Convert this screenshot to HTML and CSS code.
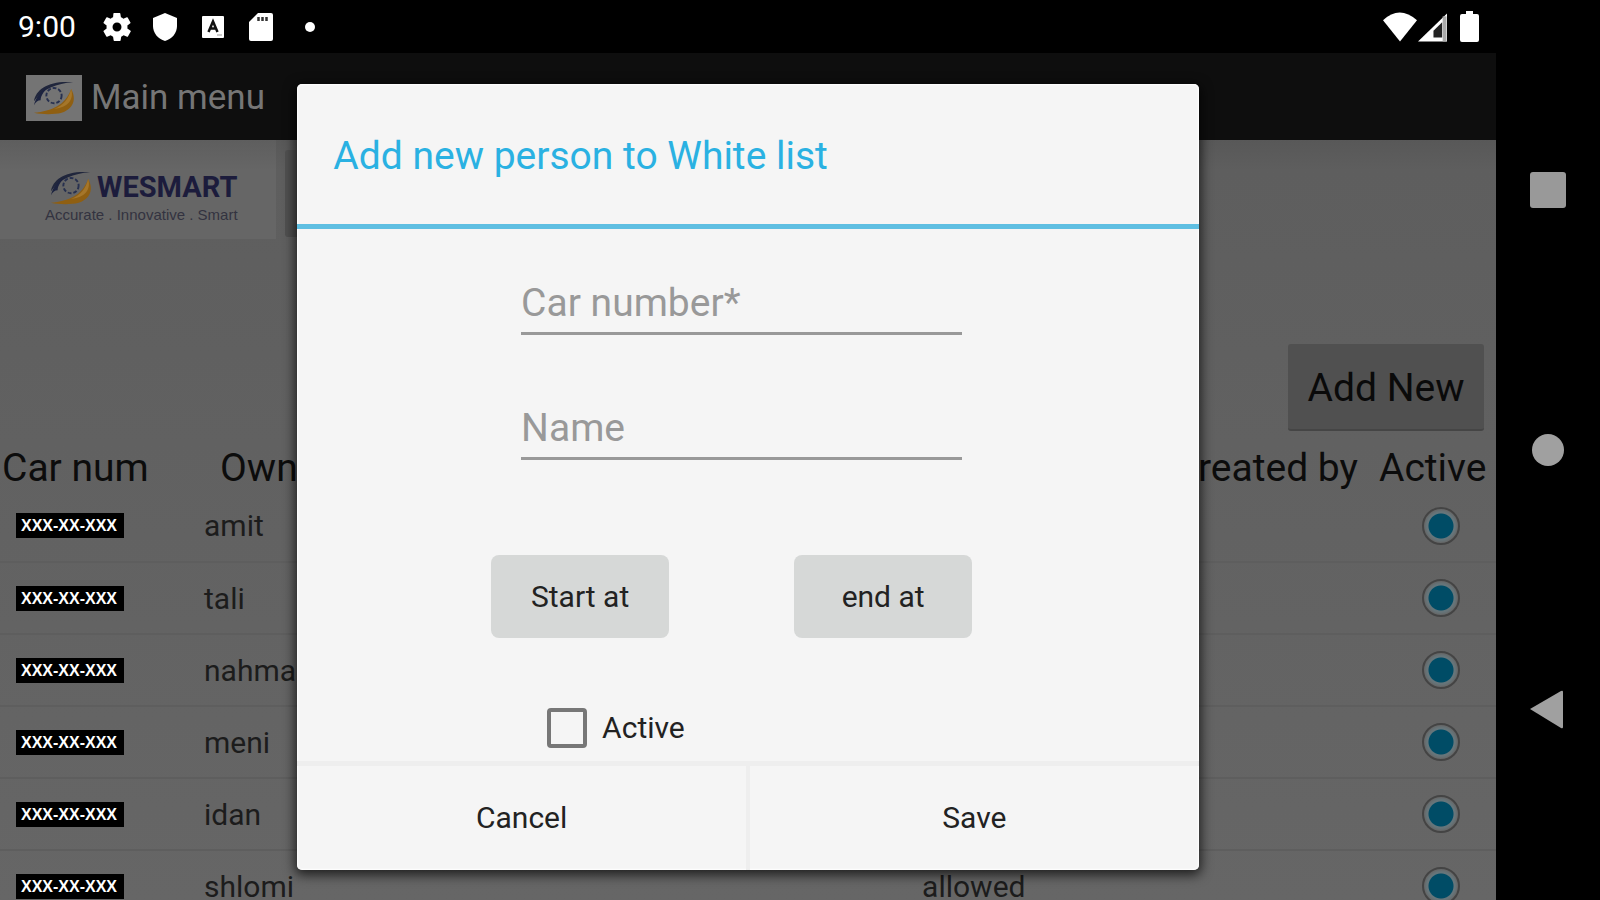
FILE: index.html
```html
<!DOCTYPE html>
<html lang="en">
<head>
    <meta charset="UTF-8">
    <meta name="viewport" content="width=device-width, initial-scale=1.0">
    <title>White list</title>
    <link rel="stylesheet" href="styles.css">
</head>
<body>
    <svg width="0" height="0" class="defs" aria-hidden="true">
        <symbol id="eye" viewBox="0 0 44 36">
            <path d="M1 22C3 9 17 0 42 2C25 3 10 9 1 22Z" fill="#20263c"/>
            <path d="M1 26C3 18 8 11 16 7C10 13 8 17 8 21C5 21 3 23 1 26Z" fill="#1c2340"/>
            <circle cx="22" cy="16" r="8" fill="none" stroke="#27304f" stroke-width="2" stroke-dasharray="4 2"/>
            <path d="M1 34C20 32 34 26 40 9C46 20 42 30 30 34C22 36 10 36 1 34Z" fill="#8f5f12"/>
            <path d="M22 30C32 26 37 20 40 9C43 19 38 28 22 30Z" fill="#a5762a"/>
        </symbol>
    </svg>
    <div class="device">
        <div class="screen">
            <div class="status">
                <span class="time">9:00</span>
                <div class="icons">
                    <svg viewBox="2 2 20 20"><path fill="#fff" fill-rule="evenodd" d="M19.4 13a7 7 0 0 0 0-2l2.1-1.6a.5.5 0 0 0 .1-.6l-2-3.5a.5.5 0 0 0-.6-.2l-2.5 1a7 7 0 0 0-1.7-1l-.4-2.6a.5.5 0 0 0-.5-.5h-4a.5.5 0 0 0-.5.5L9.200 5.100a7 7 0 0 0-1.700 1l-2.500-1a.5.5 0 0 0-.6.2l-2 3.500a.5.5 0 0 0 .1.600L4.600 11a7 7 0 0 0 0 2l-2.100 1.600a.5.5 0 0 0-.1.600l2 3.500c.1.200.4.300.6.200l2.500-1a7 7 0 0 0 1.700 1l.4 2.600c0 .3.200.5.500.5h4c.3 0 .5-.2.500-.5l.4-2.600a7 7 0 0 0 1.700-1l2.500 1c.2.100.5 0 .6-.2l2-3.500a.5.5 0 0 0-.1-.6zM12 15.200a3.200 3.200 0 1 1 0-6.400a3.200 3.200 0 0 1 0 6.400z"/></svg>
                    <svg viewBox="0 0 28 28"><path fill="#fff" d="M14 0L26 5V13C26 20 21 26 14 28C7 26 2 20 2 13V5Z"/></svg>
                    <svg viewBox="0 0 28 28"><rect x="3" y="3" width="22" height="22" rx="1" fill="#fff"/><path d="M9.500 19L14 8.500L18.500 19M11.500 15.500h5" fill="none" stroke="#111" stroke-width="2.500"/><path d="M18 22h5" stroke="#999" stroke-width="1"/></svg>
                    <svg viewBox="0 0 28 28"><path fill="#fff" d="M11 0H24Q26 0 26 2V26Q26 28 24 28H4Q2 28 2 26V9Z"/><path d="M11.500 4v4M15.500 4v4M19.500 4v4" stroke="#333" stroke-width="2.500"/></svg>
                    <svg viewBox="0 0 28 28"><circle cx="15" cy="14" r="5" fill="#fff"/></svg>
                </div>
                <div class="signal">
                    <svg width="34" height="31" viewBox="0 0 35 31"><path fill="#fff" d="M0 9Q17 -7 35 9L17.500 31Z"/></svg>
                    <svg width="29" height="31" viewBox="0 0 30 31"><path fill="#fff" d="M0 31L30 2V31Z"/><path fill="#222" d="M16 20L25 11V27H16Z"/><path d="M27.500 5V31" stroke="#aaa" stroke-width="4"/></svg>
                    <svg class="battery" width="19" height="31" viewBox="0 0 19 31"><path fill="#fff" d="M6 0H13V3H17Q19 3 19 5V29Q19 31 17 31H2Q0 31 0 29V5Q0 3 2 3H6Z"/></svg>
                </div>
            </div>
            <div class="actionbar">
                <span class="app-icon"><svg width="42" height="35"><use href="#eye"/></svg></span>
                <span>Main menu</span>
            </div>
            <div class="content">
                <div class="top">
                    <div class="brand">
                        <div class="brand-row">
                            <svg width="42" height="35"><use href="#eye"/></svg>
                            <span class="brand-name">WESMART</span>
                        </div>
                        <div class="tagline">Accurate . Innovative . Smart</div>
                    </div>
                    <div class="tab"></div>
                </div>
                <div class="toolbar">
                    <button class="add-new" type="button">Add New</button>
                </div>
                <table>
                    <colgroup>
                        <col class="col-car">
                        <col class="col-owner">
                        <col>
                        <col class="col-active">
                    </colgroup>
                    <thead>
                        <tr><th>Car num</th><th class="owner">Owner</th><th class="created">Created by</th><th class="active">Active</th></tr>
                    </thead>
                    <tbody>
                        <tr><td><span class="plate">XXX-XX-XXX</span></td><td>amit</td><td></td><td class="state"><input type="radio" name="r1" aria-label="Active" checked></td></tr>
                        <tr><td><span class="plate">XXX-XX-XXX</span></td><td>tali</td><td></td><td class="state"><input type="radio" name="r2" aria-label="Active" checked></td></tr>
                        <tr><td><span class="plate">XXX-XX-XXX</span></td><td>nahman</td><td></td><td class="state"><input type="radio" name="r3" aria-label="Active" checked></td></tr>
                        <tr><td><span class="plate">XXX-XX-XXX</span></td><td>meni</td><td></td><td class="state"><input type="radio" name="r4" aria-label="Active" checked></td></tr>
                        <tr><td><span class="plate">XXX-XX-XXX</span></td><td>idan</td><td></td><td class="state"><input type="radio" name="r5" aria-label="Active" checked></td></tr>
                        <tr><td><span class="plate">XXX-XX-XXX</span></td><td>shlomi</td><td>allowed</td><td class="state"><input type="radio" name="r6" aria-label="Active" checked></td></tr>
                    </tbody>
                </table>
            </div>
            <div class="overlay">
                <form class="dialog" role="dialog" aria-labelledby="dialogTitle">
                    <h2 id="dialogTitle">Add new person to White list</h2>
                    <div class="fields">
                        <input class="text" type="text" name="car" placeholder="Car number*" aria-label="Car number">
                        <input class="text" type="text" name="name" placeholder="Name" aria-label="Name">
                        <div class="dates">
                            <button class="date" type="button">Start at</button>
                            <button class="date" type="button">end at</button>
                        </div>
                        <label class="check"><input type="checkbox" name="active">Active</label>
                    </div>
                    <div class="actions">
                        <button type="button">Cancel</button>
                        <button type="button">Save</button>
                    </div>
                </form>
            </div>
        </div>
        <div class="nav">
            <button type="button" aria-label="Recent apps"><svg width="36" height="36"><rect width="36" height="36" rx="3" fill="#999"/></svg></button>
            <button type="button" aria-label="Home"><svg width="34" height="34"><circle cx="17" cy="17" r="16" fill="#a0a0a0"/></svg></button>
            <button type="button" aria-label="Back"><svg width="36" height="40"><path d="M0 19L31 1Q33 0 33 2V37Q33 39 31 38Z" fill="#a0a0a0"/></svg></button>
        </div>
    </div>
</body>
</html>
```

FILE: styles.css
```css
* {
    box-sizing: border-box;
}
body {
    margin: 0;
    background-color: #000;
    font-family: Roboto, "Liberation Sans", sans-serif;
    font-size: 30px;
}
button, input {
    font-family: inherit;
    font-size: inherit;
}
button {
    border: none;
    padding: 0;
    cursor: pointer;
}
svg {
    display: block;
}
.defs {
    position: absolute;
}
.device {
    display: grid;
    grid-template-columns: 1fr 104px;
    height: 100vh;
    overflow: hidden;
}
.screen {
    position: relative;
    display: flex;
    flex-direction: column;
    min-height: 0;
    overflow: hidden;
}

/* status bar */
.status {
    display: flex;
    align-items: center;
    flex: none;
    height: 53px;
    padding: 0 17px 0 18px;
    background-color: #000;
    color: #fff;
}
.time {
    width: 85px;
}
.icons {
    display: flex;
    gap: 20px;
}
.icons svg {
    width: 28px;
    height: 28px;
}
.signal {
    display: flex;
    gap: 1px;
    margin-left: auto;
}
.battery {
    margin-left: 12px;
}

.actionbar {
    display: flex;
    align-items: center;
    gap: 9px;
    flex: none;
    height: 87px;
    padding: 2px 0 0 26px;
    background-color: #0e0e0e;
    color: #767676;
    font-size: 35px;
}
.app-icon {
    display: grid;
    place-items: center;
    width: 56px;
    height: 46px;
    background-color: #747474;
}

.content {
    flex: 1;
    min-height: 0;
    overflow: hidden;
    background: linear-gradient(#585858, #5e5e5e 30px, #666);
}
.top {
    display: flex;
    gap: 9px;
    height: 99px;
}
.brand {
    width: 276px;
    padding: 27px 0 0 45px;
    background: linear-gradient(#5e5e5e, #666 30px);
    color: #1c1c3c;
}
.brand-row {
    display: flex;
    align-items: center;
    gap: 5px;
    padding-left: 5px;
}
.brand-name {
    font-size: 29px;
    line-height: 40px;
    font-weight: bold;
}
.tagline {
    font-family: "Liberation Sans", sans-serif;
    font-size: 15px;
    line-height: 16px;
    color: #333340;
}
.tab {
    width: 196px;
    height: 87px;
    margin-top: 10px;
    border-radius: 3px;
    background-color: #505050;
}
.toolbar {
    display: flex;
    justify-content: flex-end;
    padding: 105px 12px 15px 0;
}
.add-new {
    width: 196px;
    height: 87px;
    padding-top: 3px;
    border-radius: 3px;
    border-bottom: 2px solid #454545;
    background-color: #505050;
    color: #0a0a0a;
    font-size: 39px;
}

table {
    width: 100%;
    table-layout: fixed;
    border-collapse: collapse;
    color: #1c1c1c;
}
.col-car {
    width: 204px;
}
.col-owner {
    width: 48%;
}
.col-active {
    width: 138px;
}
th {
    height: 44px;
    padding: 0 0 0 2px;
    color: #0c0c0c;
    font-size: 39px;
    line-height: 44px;
    font-weight: normal;
    text-align: left;
    white-space: nowrap;
}
th.owner {
    padding-left: 16px;
}
th.created {
    text-align: right;
}
th.active {
    padding-left: 21px;
}
td {
    height: 72px;
    padding: 0;
    border-bottom: 2px solid #5e5e5e;
}
.plate {
    display: block;
    width: 108px;
    margin-left: 16px;
    padding-left: 5px;
    background-color: #000;
    color: #fff;
    font-family: "Liberation Sans", sans-serif;
    font-size: 16px;
    line-height: 25px;
    font-weight: bold;
}
td.state {
    padding-left: 28px;
}
td input {
    appearance: none;
    display: block;
    width: 38px;
    height: 38px;
    margin: 0 auto;
    border: 2px solid #444;
    border-radius: 50%;
    background: radial-gradient(circle, #004c66 12px, #66757a 13px, #66757a 14px, #666 17px);
}

/* add person dialog */
.overlay {
    position: absolute;
    inset: 53px 0 0;
    display: flex;
    align-items: center;
    justify-content: center;
}
.dialog {
    width: 60.25%;
    border-radius: 5px;
    background-color: #f5f5f5;
    box-shadow: inset 0 0 2px 1px #fff, 0 3px 12px 2px rgba(0, 0, 0, 0.7);
    color: #222;
}
h2 {
    margin: 0;
    padding: 49px 36px 44px;
    border-bottom: 5px solid #5fbfe2;
    color: #2ab1e2;
    font-size: 39px;
    line-height: 47px;
    font-weight: normal;
}
.fields {
    width: 481px;
    margin-left: 21.5%;
    padding: 51px 0 13px;
}
.text {
    display: block;
    width: 441px;
    height: 55px;
    margin: 0 0 70px 30px;
    padding: 0 0 5px;
    border: none;
    border-bottom: 3px solid #999;
    background: none;
    outline: none;
    font-size: 39px;
}
.text::placeholder {
    color: #999;
}
.dates {
    display: flex;
    justify-content: space-between;
    margin-top: 95px;
}
.date {
    width: 178px;
    height: 83px;
    border-radius: 8px;
    background-color: #d6d8d7;
    color: #222;
}
.check {
    display: flex;
    align-items: center;
    gap: 15px;
    margin: 70px 0 0 56px;
}
.check input {
    appearance: none;
    width: 40px;
    height: 40px;
    margin: 0;
    border: 4px solid #777;
    border-radius: 4px;
}
.actions {
    display: flex;
    border-top: 5px solid #eee;
}
.actions button {
    flex: 1;
    height: 104px;
    background: none;
    color: #222;
}
.actions button + button {
    border-left: 4px solid #eee;
}

.nav {
    display: flex;
    flex-direction: column;
    padding: 60px 0;
    background-color: #000;
}
.nav button {
    flex: 1;
    display: grid;
    place-items: center;
    background: none;
}
```
